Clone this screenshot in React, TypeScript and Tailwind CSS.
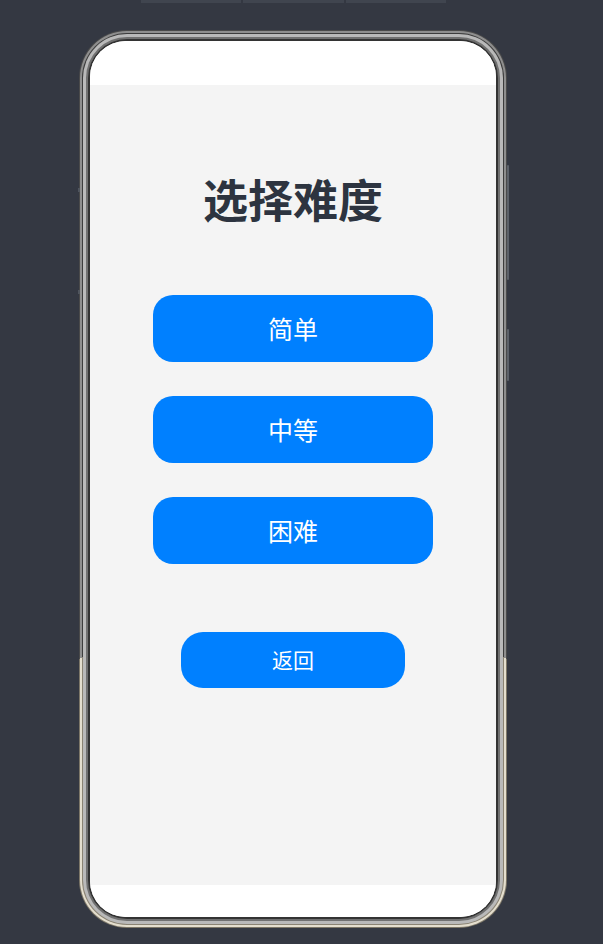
import React from 'react';

const levels = ['简单', '中等', '困难'];

const font = { fontFamily: '"Noto Sans CJK SC", "Noto Sans", sans-serif' };

export default function App() {
  return (
    <div className="w-[603px] h-[944px] bg-[#343842] overflow-hidden" style={font}>
      {/* toolbar fragment at the very top */}
      <div className="ml-[141px] flex h-[3px] w-[305px] gap-[2px]">
        <div className="flex-1 bg-[#40454f]" />
        <div className="flex-1 bg-[#40454f]" />
        <div className="flex-1 bg-[#40454f]" />
      </div>

      {/* phone body */}
      <div className="relative ml-[79px] mt-[27px] w-[428px] h-[898px]">
        <div className="absolute right-[-2px] top-[135px] h-[115px] w-[2px] rounded-full bg-[#5d626a]" />
        <div className="absolute right-[-2px] top-[299px] h-[52px] w-[2px] rounded-full bg-[#5d626a]" />
        <div className="absolute left-[-1px] top-[158px] h-[4px] w-[2px] bg-[#50555d]" />
        <div className="absolute left-[-1px] top-[260px] h-[4px] w-[2px] bg-[#50555d]" />

        <div className="h-full w-full rounded-[48px] bg-[linear-gradient(180deg,#4a4a4a_0%,#4a4a4a_70%,#7d7768_70%,#7d7768_100%)] p-px">
          <div className="h-full w-full rounded-[47px] bg-[linear-gradient(180deg,#8e8e8e_0%,#8e8e8e_70%,#e4dece_70%,#e4dece_100%)] p-[2px]">
            <div className="h-full w-full rounded-[45px] bg-[linear-gradient(180deg,#3c3c3c_0%,#3c3c3c_70%,#8a8373_70%,#8a8373_100%)] p-px">
              <div className="h-full w-full rounded-[44px] bg-[#b9b9b9] p-[3px]">
                <div className="h-full w-full rounded-[41px] bg-[#707070] p-[2px]">
                  <div className="h-full w-full rounded-[39px] bg-[#333333] p-[2px]">
                    {/* screen */}
                    <div className="flex h-full w-full flex-col overflow-hidden rounded-[36px] bg-white">
                      <div className="h-[44px] shrink-0 bg-white" />
                      <div className="flex flex-1 flex-col items-center bg-[#f4f4f4]">
                        <h1 className="mt-[91px] text-[45px] font-bold leading-none text-[#2d3440]">
                          选择难度
                        </h1>
                        <div className="mt-[74px] flex flex-col gap-[34px]">
                          {levels.map((level) => (
                            <button
                              key={level}
                              className="flex h-[67px] w-[280px] items-center justify-center rounded-[20px] bg-[#0080ff] text-[25px] font-normal text-white"
                            >
                              {level}
                            </button>
                          ))}
                        </div>
                        <button className="mt-[68px] flex h-[56px] w-[224px] items-center justify-center rounded-[22px] bg-[#0080ff] text-[21px] font-normal text-white">
                          返回
                        </button>
                      </div>
                      <div className="h-[32px] shrink-0 bg-white" />
                    </div>
                  </div>
                </div>
              </div>
            </div>
          </div>
        </div>
      </div>
    </div>
  );
}
